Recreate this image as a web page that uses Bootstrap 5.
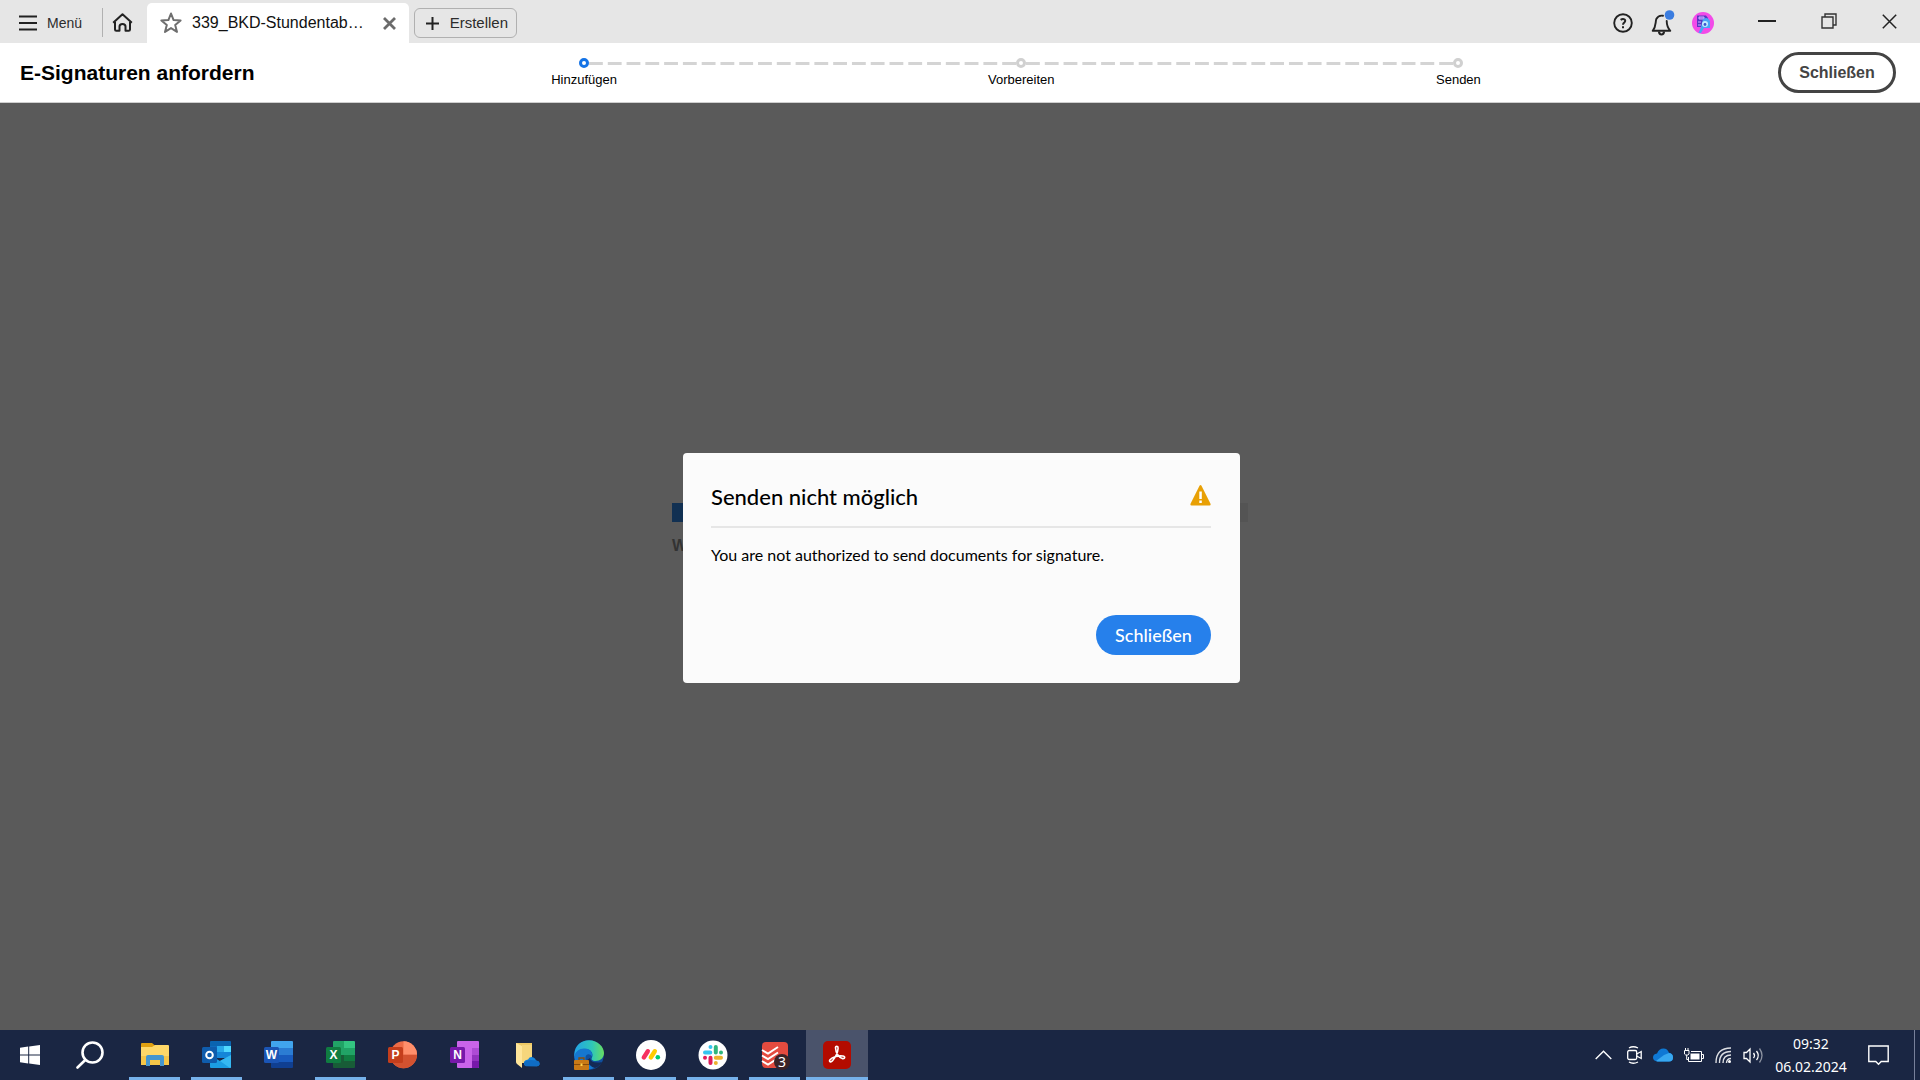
<!DOCTYPE html>
<html lang="de">
<head>
<meta charset="utf-8">
<meta name="viewport" content="width=device-width, initial-scale=1">
<title>E-Signaturen anfordern</title>
<link href="https://cdn.jsdelivr.net/npm/bootstrap@5.3.0/dist/css/bootstrap.min.css" rel="stylesheet">
<style>
  body { font-family: "Liberation Sans", Arial, sans-serif; background: #5a5a5a; color: #000; }
  svg { display: block; flex: none; }
  button { border: 0; background: none; padding: 0; color: inherit; }
  .titlebar { height: 43px; background: #e6e6e6; color: #2c2c2c; font-size: 15px; line-height: 20px; }
  .bar-group { height: 43px; padding-top: 2px; }
  .menu-btn { padding-left: 19px; gap: 10px; height: 37px; font-size: 14px; }
  .sep { width: 1px; height: 29px; background: #b1b1b1; margin: 0 9px 0 20px; }
  .doc-tab { width: 262px; height: 40px; margin-left: 14px; padding: 0 13px; gap: 10px; background: #fff; border-radius: 5px 5px 0 0; font-size: 16px; color: #111; }
  .create-btn { height: 30px; width: 103px; margin-left: 5px; padding: 0 8px 0 11px; border: 1px solid #b0b0b0; border-radius: 6px; }
  .sys { gap: 17px; }
  .win { gap: 45px; margin-left: 44px; padding-right: 23px; height: 34px; }
  .taskhead { min-height: 60px; background: #fff; border-bottom: 1px solid #cfcfcf; padding: 0 24px 0 20px; }
  .taskhead h1 { font-size: 21px; line-height: 28px; font-weight: 700; }
  .stepper { margin: 0 101px 0 111px; padding: 15px 0 0; font-size: 13px; line-height: 16px; }
  .stepper li { flex: 1 1 0; position: relative; text-align: center; }
  .dot { display: block; width: 10px; height: 10px; margin: 0 auto 4px; border: 3px solid #d0d0d0; border-radius: 50%; background: #fff; position: relative; z-index: 1; }
  .active .dot { border-color: #1473e6; }
  .stepper li:not(:last-child)::after { content: ""; position: absolute; top: 4px; left: calc(50% + 5px); width: calc(100% - 5px); height: 3px; background: linear-gradient(90deg, #d4d4d4 75%, transparent 75%) 0 0 / 19px 3px round; }
  .close-outline { width: 118px; height: 41px; border: 3px solid #444; border-radius: 21px; font-size: 16px; font-weight: 700; color: #444; }
  .stage { background: #5a5a5a; }
  .loading { width: 576px; font-size: 16px; line-height: 20px; font-weight: 700; color: #333; padding-bottom: 74px; }
  .loading .progress { height: 19px; border-radius: 0; background: #545454; margin-bottom: 14px; }
  .loading .progress-bar { background: #113052; }
  .overlay { position: absolute; inset: 0; font-family: Lato, "Noto Sans", sans-serif; }
  .alert-box { width: 557px; min-height: 230px; margin: 3px 0 0 3px; padding: 28px 29px 28px 28px; background: #fbfbfb; border-radius: 4px; }
  .alert-box h2 { font-size: 22px; line-height: 32px; font-weight: 500; }
  .alert-head { padding-bottom: 13px; border-bottom: 2px solid #e6e6e6; }
  .alert-head svg { margin-bottom: 4px; }
  .alert-text { font-size: 16px; line-height: 24px; margin: 15px 0 48px; }
  .close-fill { width: 115px; height: 40px; border-radius: 20px; background: #2680eb; color: #fff; font-size: 18px; font-weight: 500; }
  .taskbar { height: 50px; background: #1a2643; color: #fff; font-family: "Noto Sans", sans-serif; }
  .tb-main { width: 60px; height: 50px; }
  .tb-app { width: 62px; height: 50px; position: relative; }
  .tb-app.open::after { content: ""; position: absolute; bottom: 0; left: 5px; right: 6px; height: 3px; background: #76b1ea; }
  .tb-app.current { background: #4a536b; }
  .tb-app.current::after { left: 0; right: 0; }
  .tb-app svg { margin: 0 auto; }
  .tray { gap: 11px; }
  .clock { width: 72px; font-size: 14px; line-height: 23px; text-align: center; }
  .notes { margin: 0 14px 0 10px; }
  .desk { width: 6px; height: 50px; border-left: 1px solid #77809a; }
  .ico { font-family: "Liberation Sans", Arial, sans-serif; font-weight: 700; fill: #fff; }
</style>
<script src="https://cdn.jsdelivr.net/npm/bootstrap@5.3.0/dist/js/bootstrap.bundle.min.js"></script>
</head>
<body class="d-flex flex-column min-vh-100">

<header class="titlebar d-flex align-items-end">
  <div class="bar-group d-flex align-items-center">
    <button class="menu-btn d-flex align-items-center" type="button">
      <svg width="18" height="16" viewBox="0 0 18 16" stroke="#222" stroke-width="2"><path d="M0 1.500h18M0 8h18M0 14.500h18"/></svg>Menü</button>
    <span class="sep"></span>
    <button type="button" aria-label="Startseite">
      <svg width="21" height="19" viewBox="0 0 21 19" fill="none" stroke="#222" stroke-width="2" stroke-linejoin="round"><path d="M1.200 9.800 10.500 1.200l9.300 8.600M3 9v7.500q0 1.300 1.300 1.300h3.200v-4.300q0-2.600 3-2.600t3 2.600v4.300h3.200q1.300 0 1.300-1.300V9"/></svg></button>
  </div>
  <div class="doc-tab d-flex align-items-center">
    <button type="button" aria-label="Favorit"><svg width="22" height="22" viewBox="0 0 22 22" fill="none" stroke="#6e6e6e" stroke-width="2" stroke-linejoin="round"><path d="m11 1.500 2.600 6.600 7 .4-5.400 4.500 1.800 6.900L11 16.100 5 19.900l1.800-6.900L1.400 8.500l7-.4z"/></svg></button>
    <span class="flex-grow-1 text-nowrap">339_BKD-Stundentab…</span>
    <button type="button" aria-label="Tab schließen"><svg width="13" height="13" viewBox="0 0 13 13" stroke="#6b6b6b" stroke-width="2.800"><path d="m1 1 11 11M12 1 1 12"/></svg></button>
  </div>
  <div class="d-flex align-items-center align-self-start pt-2">
    <button class="create-btn d-flex align-items-center justify-content-between" type="button">
      <svg width="13" height="13" viewBox="0 0 13 13" stroke="#222" stroke-width="2"><path d="M6.500 0v13M0 6.500h13"/></svg>Erstellen</button>
  </div>
  <div class="sys bar-group d-flex align-items-center ms-auto">
    <button type="button" aria-label="Hilfe"><svg width="20" height="20" viewBox="0 0 20 20" fill="none" stroke="#222" stroke-width="1.900"><circle cx="10" cy="10" r="8.800"/><path d="M7.600 6.900Q9.800 5.300 11.600 6.500q1.300 1.300-.1 2.700Q10 10.400 10 11.700M10 13.200v2" stroke-width="2"/></svg></button>
    <button type="button" aria-label="Benachrichtigungen"><svg width="25" height="26" viewBox="0 0 25 26" fill="none"><path d="M13 5.800Q8.500 5 6.300 9c-1.100 3.500 0 7.500-3.600 11.800h17.600Q16.800 17 16.700 11" stroke="#222" stroke-width="1.900" stroke-linejoin="round" stroke-linecap="round"/><path d="M9 21.500q.2 3 2.500 3t2.500-3" stroke="#222" stroke-width="2.200"/><circle cx="19.500" cy="5" r="4.800" fill="#3b7de0"/></svg></button>
    <button type="button" aria-label="Profil"><svg width="22" height="22" viewBox="0 0 22 22"><circle cx="11" cy="11" r="11" fill="#f24be8"/><path d="M5 3.500h9l2 2.500v9H5z" fill="#5a35c4"/><path d="M7 5h5v2H7zM6 10h3M6 13h3" fill="#8a5bea" stroke="#c8b4ff" stroke-width="1"/><path d="M11 7q5-3 7 2v7h-6L9 21H6.500L9 15z" fill="#48a5f5"/><circle cx="13" cy="12" r="3" fill="#c2ecff"/><circle cx="13" cy="12.500" r="1.400" fill="#3a55d0"/></svg></button>
  </div>
  <div class="win d-flex align-items-center align-self-start pt-2">
    <button type="button" aria-label="Minimieren"><svg width="18" height="16" viewBox="0 0 18 16"><path d="M0 7h18v2H0z" fill="#222"/></svg></button>
    <button type="button" aria-label="Verkleinern"><svg width="16" height="16" viewBox="0 0 16 16" fill="none" stroke="#333" stroke-width="1.400"><path d="M1 4h11v11H1zM4 4V1h11v11h-3"/></svg></button>
    <button type="button" aria-label="Fenster schließen"><svg width="15" height="15" viewBox="0 0 15 15" stroke="#222" stroke-width="1.500"><path d="m.8.800 13.400 13.400M14.200.8.800 14.200"/></svg></button>
  </div>
</header>

<section class="taskhead d-flex align-items-center">
  <h1 class="mb-0 text-nowrap">E-Signaturen anfordern</h1>
  <ol class="stepper list-unstyled d-flex flex-grow-1 mb-0 align-self-start">
    <li class="active"><span class="dot"></span>Hinzufügen</li>
    <li><span class="dot"></span>Vorbereiten</li>
    <li><span class="dot"></span>Senden</li>
  </ol>
  <button class="close-outline" type="button">Schließen</button>
</section>

<main class="stage flex-grow-1 position-relative d-flex align-items-center justify-content-center">
  <div class="loading">
    <div class="progress" role="progressbar" aria-label="Fortschritt"><div class="progress-bar w-50"></div></div>
    W
  </div>
  <div class="overlay d-flex align-items-center justify-content-center">
    <div class="alert-box" role="alertdialog" aria-labelledby="dlg-title">
      <div class="alert-head d-flex justify-content-between align-items-center">
        <h2 id="dlg-title" class="mb-0">Senden nicht möglich</h2>
        <svg width="21" height="21" viewBox="0 0 21 21"><path d="M9.500.8q1-1.400 2 0l9 18q.5 1.700-1 1.700h-18q-1.500 0-1-1.700z" fill="#e8a005"/><path d="M9.300 6.500h2.500V14H9.300zM9.300 15.500h2.500v2.500H9.300z" fill="#fff"/></svg>
      </div>
      <p class="alert-text">You are not authorized to send documents for signature.</p>
      <div class="d-flex justify-content-end"><button class="close-fill" type="button">Schließen</button></div>
    </div>
  </div>
</main>

<footer class="taskbar d-flex align-items-center">
  <button class="tb-main d-flex align-items-center justify-content-center" type="button" aria-label="Start"><svg width="20" height="20" viewBox="0 0 20 20" fill="#fff"><path d="M0 2.800 8.200 1.600v7.900H0zM9.200 1.400 20 0v9.500H9.200zM0 10.500h8.200v8L0 17.200zM9.200 10.500H20V20L9.200 18.600z"/></svg></button>
  <button class="tb-main d-flex align-items-center justify-content-center me-1" type="button" aria-label="Suche"><svg width="28" height="28" viewBox="0 0 28 28" fill="none" stroke="#fff" stroke-width="2.600" stroke-linecap="round"><circle cx="16.500" cy="11.500" r="10"/><path d="m9.500 18.800-8 7.700"/></svg></button>

  <button class="tb-app open" type="button" aria-label="Explorer"><svg width="28" height="30" viewBox="0 0 28 30"><path d="M0 4q0-1 1-1h10l3 2.500V9H0z" fill="#e0a010"/><path d="M0 7h11l3-2h13q1 0 1 1v19H0z" fill="#ffd868"/><path d="M0 16h28v9H0z" fill="#f6c648"/><path d="M5 26v-9q0-2 2-2h14q2 0 2 2v9h-4v-6h-10v6z" fill="#4596cf"/></svg></button>
  <button class="tb-app open" type="button" aria-label="Outlook"><svg width="30" height="28" viewBox="0 0 30 28"><path d="M8 1q0-1 1-1h19q1 0 1 1v13H8z" fill="#0a64b0"/><path d="M8 5h7v9H8z" fill="#0f6cbd"/><path d="M15 5h7v6h-7z" fill="#28a8ea"/><path d="M22 5h7v6h-7z" fill="#50d9ff"/><path d="M15 11h14v6H15z" fill="#1486d8"/><path d="M8 14l10 6 11-6v12q0 1-1 1H9q-1 0-1-1z" fill="#1b9de2"/><path d="m18 20 11-6v12q0 1-1 1z" fill="#35b8f1"/><rect y="6" width="15" height="16" rx="1.500" fill="#0f5cac"/><circle cx="7.500" cy="14" r="3.300" fill="none" stroke="#fff" stroke-width="2"/></svg></button>
  <button class="tb-app" type="button" aria-label="Word"><svg width="30" height="28" viewBox="0 0 30 28"><path d="M7 1q0-1 1-1h20q1 0 1 1v6H7z" fill="#41a5ee"/><path d="M7 7h22v7H7z" fill="#2b7cd3"/><path d="M7 14h22v7H7z" fill="#185abd"/><path d="M7 21h22v5q0 1-1 1H8q-1 0-1-1z" fill="#103f91"/><rect y="6" width="15" height="16" rx="1.500" fill="#1b55b5"/><text class="ico" x="7.500" y="18" font-size="12" text-anchor="middle">W</text></svg></button>
  <button class="tb-app open" type="button" aria-label="Excel"><svg width="30" height="28" viewBox="0 0 30 28"><path d="M7 1q0-1 1-1h10v14H7z" fill="#21a366"/><path d="M18 0h10q1 0 1 1v6H18z" fill="#33c481"/><path d="M18 7h11v7H18z" fill="#21a366"/><path d="M7 14h22v12q0 1-1 1H8q-1 0-1-1z" fill="#185c37"/><path d="M18 14h11v6H18z" fill="#107c41"/><rect y="6" width="15" height="16" rx="1.500" fill="#107c41"/><text class="ico" x="7.500" y="18" font-size="12" text-anchor="middle">X</text></svg></button>
  <button class="tb-app" type="button" aria-label="PowerPoint"><svg width="30" height="28" viewBox="0 0 30 28"><circle cx="15.500" cy="13.800" r="13.500" fill="#ed6c47"/><path d="M15.500.3A13.500 13.500 0 0 1 29 13.800H15.500z" fill="#ff8f6b"/><path d="M2 13.800h27a13.500 13.500 0 0 1-27 0z" fill="#d35230"/><rect y="6" width="15" height="16" rx="1.500" fill="#c43e1c"/><text class="ico" x="7.500" y="18" font-size="12" text-anchor="middle">P</text></svg></button>
  <button class="tb-app" type="button" aria-label="OneNote"><svg width="30" height="28" viewBox="0 0 30 28"><path d="M7 1q0-1 1-1h20q1 0 1 1v25q0 1-1 1H8q-1 0-1-1z" fill="#ca64ea"/><path d="M22 7h7v7h-7z" fill="#ae4bd5"/><path d="M22 14h7v6h-7z" fill="#9332bf"/><path d="M22 20h7v6q0 1-1 1h-6z" fill="#7719aa"/><rect y="6" width="15" height="16" rx="1.500" fill="#7719aa"/><text class="ico" x="7.500" y="18" font-size="12" text-anchor="middle">N</text></svg></button>
  <button class="tb-app" type="button" aria-label="OneDrive-Ordner"><svg width="26" height="28" viewBox="0 0 26 28"><path d="M2 2h16v20H5z" fill="#efc966"/><path d="m2 2 6 3v22l-5-4q-1-1-1-2z" fill="#ffe59a"/><path d="M8 4h10v18H8z" fill="#f6d67c"/><path d="M12 25q-2.500-1-2-4 1-2.500 4-2.500 2-3.500 5.500-2 2 .8 2.500 3 4 .5 3.500 4-.6 1.800-2.500 1.800z" fill="#1584dc"/><path d="M10 21q4-3 12-1.500 4 .5 3.500 4-.6 1.800-2.500 1.800H12q-2.500-1-2-4" fill="#0f6cc4"/></svg></button>
  <button class="tb-app open" type="button" aria-label="Edge"><svg width="30" height="30" viewBox="0 0 30 30"><defs><linearGradient id="eg" x1="0" x2="1"><stop offset="0" stop-color="#22a3e6"/><stop offset=".6" stop-color="#2fc7b8"/><stop offset="1" stop-color="#68dd60"/></linearGradient></defs><circle cx="15" cy="15" r="14.800" fill="#0f4f9e"/><path d="M.3 14C1 5 7.500.2 15 .2 24 .2 30 7 30 13c0 5-4 8-8.500 8-3.500 0-4.500-1.700-3.500-3.500C20 13 16 8.500 11 9 5 9.500 1 13 .3 18z" fill="url(#eg)"/><path d="M.3 17C1 11 6 8 11 8.500c5 0 8 4 7 8-2-3-6-3-6.500 1-.5 5 3 9 10 9-3 3-8 3.500-12 2Q0 25 .3 17z" fill="#1677cf"/><path d="M16 18q1 6 12 4-2 4-7 6-5-1-8-8z" fill="#142a55"/><rect y="20" width="15" height="10" rx="1" fill="#c97a16"/><path d="M0 24h15v1H0z" fill="#8a4c08"/><path d="M5 20v-2h5v2" fill="none" stroke="#8a4c08" stroke-width="1.300"/><path d="M6.500 23.500h2v2.500h-2z" fill="#ffd24d"/></svg></button>
  <button class="tb-app open" type="button" aria-label="monday"><svg width="30" height="30" viewBox="0 0 30 30"><circle cx="15" cy="15" r="15" fill="#fff"/><g stroke-width="4.400" stroke-linecap="round"><path d="m7.800 17.500 4-6.300" stroke="#f6325f"/><path d="m14.800 17.500 4-6.300" stroke="#ffcb00"/></g><circle cx="21.800" cy="17.300" r="2.300" fill="#00ca72"/></svg></button>
  <button class="tb-app open" type="button" aria-label="Slack"><svg width="30" height="30" viewBox="0 0 30 30"><circle cx="15" cy="15" r="14.500" fill="#fff"/><g stroke-width="4" stroke-linecap="round"><path d="M7 12.500h5.300M12.500 7v.01" stroke="#36c5f0"/><path d="M17.800 7v5.500M23 12.500v.01" stroke="#2eb67d"/><path d="M17.800 17.800H23M17.800 23v.01" stroke="#ecb22e"/><path d="M12.500 17.800V23M7 17.800v.01" stroke="#e01e5a"/></g></svg></button>
  <button class="tb-app open" type="button" aria-label="Todoist"><svg width="30" height="30" viewBox="0 0 30 30"><rect x="2" y="2" width="26" height="26" rx="4" fill="#e44b3f"/><path d="m2 10 6 3.500 10-6.500M2 15.500 8 19l10-6.500M2 21l6 3.500 8-5" fill="none" stroke="#fff" stroke-width="2"/><circle cx="22" cy="22" r="8" fill="#3a2327"/><text x="22" y="27" font-size="14" text-anchor="middle" fill="#fff" font-family="Noto Sans">3</text></svg></button>
  <button class="tb-app open current" type="button" aria-label="Acrobat"><svg width="28" height="28" viewBox="0 0 28 28"><rect width="28" height="28" rx="5" fill="#b30b00"/><path d="M12.500 6.800c0-2 2.800-2 2.600.5-.3 4-2.600 9-5.600 12.500-1.700 2-4 .8-2.500-1.100 2.500-3 8.500-4.300 12.800-3.700 2.800.5 2.200 2.900-.2 2.600-3.200-.4-7-5.500-7.100-10.800z" fill="none" stroke="#fff" stroke-width="1.600"/></svg></button>

  <div class="tray d-flex align-items-center ms-auto">
    <svg class="me-1" width="17" height="10" viewBox="0 0 17 10" fill="none" stroke="#fff" stroke-width="1.400"><path d="m.7 9 7.800-7.800L16.300 9"/></svg>
    <svg width="15" height="18" viewBox="0 0 15 18" fill="none" stroke="#fff" stroke-width="1.300"><rect x=".7" y="4.500" width="9" height="9" rx="1.500"/><path d="m9.700 8 4.500-2.500v7L9.700 10M2 2q4-2.500 9 0M2 16q4 2.500 9 0"/></svg>
    <svg width="20" height="14" viewBox="0 0 20 14"><path d="M4.500 13.500Q0 13 0 9.500 0 6 4 5.500 6 .5 10.500.5q4 0 5.500 4.300 4 .5 4 4.700 0 4-4 4z" fill="#0f78d4"/><path d="m3 13 8-6 5-2q4 .5 4 4.500 0 4-4 4H4.500z" fill="#38a8f0"/></svg>
    <svg width="20" height="15" viewBox="0 0 20 15" fill="none" stroke="#fff"><path d="M7 3.500h10.500v10h-13V9M18 6.500h1.500v4H18"/><path d="M6.500 5.500h9v6h-9z" fill="#fff" stroke="none"/><path d="M.5 2.500h4.500V6L3.800 7H1.700L.5 6zM1.500 0v2.500M4 0v2.500M2.700 7v4.500h2"/></svg>
    <svg width="17" height="17" viewBox="0 0 17 17" fill="none" stroke="#fff" stroke-width="1.400"><path d="M1 16Q1 1 16 1M4.500 16Q4.500 4.500 16 4.500M8 16q0-8 8-8M11.500 16q0-4.500 4.500-4.500" opacity=".85"/><circle cx="14.500" cy="14.500" r="1.500" fill="#fff" stroke="none"/></svg>
    <svg width="21" height="17" viewBox="0 0 21 17" fill="none" stroke="#fff" stroke-width="1.300"><path d="M1 5.500h2.500L7 2v13l-3.500-3.500H1zM10.500 6q2 2.500 0 5M13.500 4q3.500 4.500 0 9"/><path d="M16.500 1.500q5 7 0 14" opacity=".5"/></svg>
    <div class="clock">09:32<br>06.02.2024</div>
    <button type="button" class="notes" aria-label="Info-Center"><svg width="21" height="21" viewBox="0 0 21 21" fill="none" stroke="#fff" stroke-width="1.400"><path d="M.8 1h19.400v15.500h-7L10.500 19.200 7.800 16.500h-7z"/></svg></button>
    <span class="desk"></span>
  </div>
</footer>
</body>
</html>
